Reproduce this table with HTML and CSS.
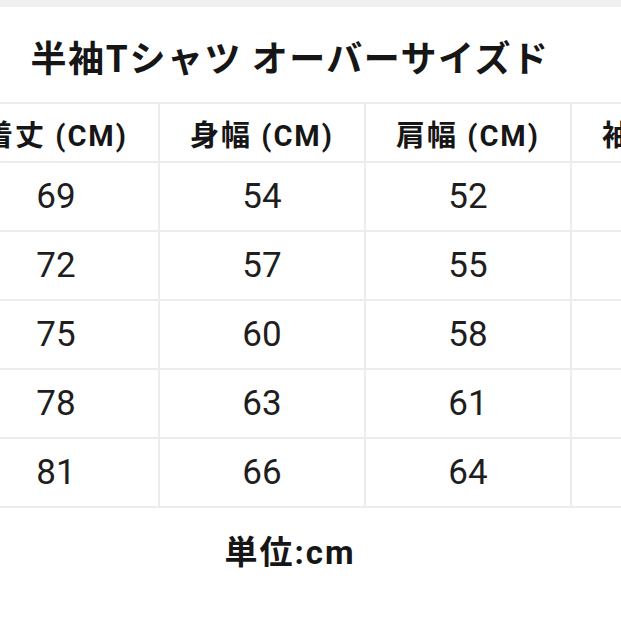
FILE: index.html
```html
<!DOCTYPE html>
<html lang="ja">
<head>
<meta charset="utf-8">
<title>サイズ表</title>
<link rel="stylesheet" href="styles.css">
</head>
<body>
<div class="topbar"></div>
<main class="sheet">
  <h1 class="title">半袖Tシャツ オーバーサイズド</h1>
  <div class="table-wrap">
    <table class="size-table">
      <thead>
        <tr><th>着丈 (CM)</th><th>身幅 (CM)</th><th>肩幅 (CM)</th><th>袖丈 (CM)</th></tr>
      </thead>
      <tbody>
        <tr><td>69</td><td>54</td><td>52</td><td></td></tr>
        <tr><td>72</td><td>57</td><td>55</td><td></td></tr>
        <tr><td>75</td><td>60</td><td>58</td><td></td></tr>
        <tr><td>78</td><td>63</td><td>61</td><td></td></tr>
        <tr><td>81</td><td>66</td><td>64</td><td></td></tr>
      </tbody>
    </table>
  </div>
  <p class="unit">単位:cm</p>
</main>
</body>
</html>
```
FILE: styles.css
```css
html, body {
  margin: 0;
  padding: 0;
  background: #ffffff;
}
body {
  width: 621px;
  height: 621px;
  overflow: hidden;
  font-family: Roboto, "Noto Sans CJK JP", sans-serif;
  color: #1c1c1c;
}
.topbar {
  height: 7px;
  background: #f0f0f0;
}
.sheet {
  width: 580px;
}
.title {
  margin: 0;
  padding: 30px 0 26px;
  line-height: 39px;
  font-family: "Noto Sans CJK JP", sans-serif;
  font-size: 36px;
  font-weight: 700;
  letter-spacing: 1.5px;
  text-align: center;
  color: #161616;
}
.table-wrap {
  margin-left: -48px;
}
.size-table {
  border-collapse: collapse;
  table-layout: fixed;
  width: 824px;
}
.size-table th,
.size-table td {
  width: 204px;
  padding: 0;
  border: 2px solid #ececec;
  text-align: center;
  vertical-align: middle;
}
.size-table th {
  height: 57px;
  font-size: 29px;
  font-weight: 700;
  letter-spacing: 2px;
  color: #161616;
}
.size-table td {
  height: 67px;
  font-size: 35px;
  font-weight: 400;
  color: #1e1e1e;
}
.unit {
  margin: 0;
  padding-top: 24px;
  line-height: 42px;
  font-size: 33px;
  font-weight: 700;
  letter-spacing: 2px;
  text-align: center;
  color: #161616;
}
```
